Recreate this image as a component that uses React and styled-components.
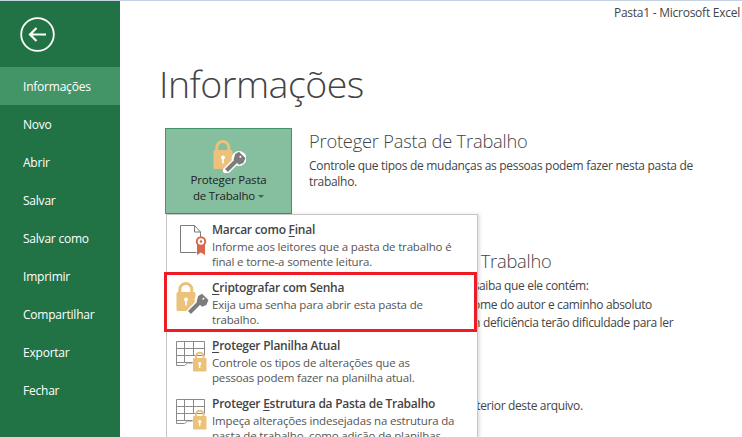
import React from "react";
import styled, { createGlobalStyle } from "styled-components";

const GlobalStyle = createGlobalStyle`
  html, body { margin: 0; padding: 0; background: #fff; }
  body { font-family: "Open Sans", "Noto Sans", sans-serif; overflow: hidden; }
`;

const Window = styled.div`
  position: relative;
  width: 742px;
  height: 437px;
  box-sizing: border-box;
  overflow: hidden;
  display: flex;
  background: #fff;
  color: #444;
  border-top: 1px solid #c6d3e4;
`;

const Sidebar = styled.nav`
  width: 120px;
  flex: none;
  background: #217346;
`;

const BackButton = styled.div`
  height: 66px;
  padding: 16px 0 0 20px;
  box-sizing: border-box;
`;

const NavItem = styled.div`
  height: 38px;
  padding-left: 23px;
  display: flex;
  align-items: center;
  color: #fff;
  font-size: 12px;
  letter-spacing: -0.22px;
  background: ${(props) => (props.$active ? "#439467" : "transparent")};
`;

const Main = styled.main`
  flex: 1;
  min-width: 0;
  padding-left: 39px;
  display: flex;
  flex-direction: column;
`;

const TitleBar = styled.div`
  height: 19px;
  box-sizing: border-box;
  padding: 3px 2px 0 0;
  text-align: right;
  font-size: 12px;
  line-height: 17px;
  letter-spacing: -0.25px;
  color: #444;
`;

const PageTitle = styled.h1`
  margin: 37px 0 0;
  height: 71px;
  font-size: 37.5px;
  line-height: 54px;
  font-weight: 300;
  letter-spacing: -0.5px;
  color: #444;
  white-space: nowrap;
`;

const Section = styled.section`
  display: flex;
  gap: 17px;
  margin-left: 6px;
  height: ${(props) => props.$height}px;
`;

const ProtectButton = styled.div`
  width: 127px;
  height: 86px;
  flex: none;
  box-sizing: border-box;
  background: #86bf9f;
  border: 1px solid #439467;
  display: flex;
  flex-direction: column;
  align-items: center;
  padding-top: 11px;
  color: #222;
  font-size: 11.5px;
  line-height: 16px;
  letter-spacing: -0.2px;
  text-align: center;
  svg { margin-left: 2px; }
`;

const ButtonLabel = styled.div`
  margin-top: -1px;
`;

const Caret = styled.span`
  display: inline-block;
  margin-left: 3px;
  vertical-align: 2px;
  border: 3px solid transparent;
  border-top-color: #555;
  border-bottom: 0;
`;

const SectionSpacer = styled.div`
  width: 127px;
  flex: none;
`;

const SectionBody = styled.div`
  min-width: 0;
  flex: 1;
`;

const SectionTitle = styled.h2`
  margin: 0 0 4px;
  font-size: 18.3px;
  line-height: 26px;
  font-weight: 300;
  letter-spacing: -0.2px;
  color: #444;
  white-space: nowrap;
`;

const BodyText = styled.p`
  margin: 0;
  font-size: 12px;
  line-height: 16px;
  letter-spacing: -0.3px;
  color: #444;
`;

const BulletList = styled.div`
  margin-top: -1px;
`;

const BulletText = styled(BodyText)`
  line-height: 18.5px;
  letter-spacing: -0.35px;
  white-space: nowrap;
  padding-left: ${(props) => props.$indent || 0}px;
`;

const Menu = styled.div`
  position: absolute;
  left: 166px;
  top: 213px;
  width: 312px;
  height: 240px;
  box-sizing: border-box;
  padding-top: 2px;
  background: #fff;
  border: 1px solid #c6c6c6;
  box-shadow: 2px 0 3px rgba(0, 0, 0, 0.12);
`;

const MenuRow = styled.div`
  position: relative;
  height: 58px;
  box-sizing: border-box;
  display: flex;
  padding: 3px 6px 0 8px;
  gap: 4px;
  &::after {
    content: ${(props) => (props.$marked ? '""' : "none")};
    position: absolute;
    left: -3px;
    right: 0;
    top: -3px;
    bottom: 1px;
    border: 3px solid #ed1c24;
  }
`;

const MenuIcon = styled.div`
  width: 33px;
  flex: none;
  box-sizing: border-box;
  padding-top: ${(props) => props.$top}px;
  padding-left: ${(props) => props.$left || 0}px;
`;

const MenuText = styled.div`
  flex: 1;
  min-width: 0;
`;

const MenuTitle = styled.div`
  font-size: 12px;
  line-height: 20px;
  font-weight: 600;
  letter-spacing: -0.25px;
  color: #444;
  white-space: nowrap;
  u { text-underline-offset: 2px; }
`;

const MenuDesc = styled.div`
  margin-top: -1px;
  font-size: 11.5px;
  line-height: 15.5px;
  letter-spacing: -0.17px;
  color: #555;
  white-space: nowrap;
`;

const BackIcon = () => (
  <svg width="36" height="36" viewBox="0 0 36 36" fill="none" stroke="#fff">
    <circle cx="17.5" cy="17.5" r="16.3" strokeWidth="1.8" />
    <path d="M10 17.5h16M16.5 11l-6.5 6.5 6.5 6.5" strokeWidth="2.2" />
  </svg>
);

// cadeado com a chave cinza, usado no botao e no item marcado
const LockKey = () => (
  <svg width="33" height="33" viewBox="0 0 33 33" style={{ display: "block" }}>
    <path d="M3.8 11V7.5a6 6 0 0 1 12 0V11" fill="none" stroke="#ecc27a" strokeWidth="3" />
    <rect x="0.5" y="10" width="19" height="19" rx="1.5" fill="#ecc27a" />
    <circle cx="10" cy="17.5" r="2" fill="#fff" />
    <rect x="9.2" y="17.5" width="1.6" height="6" fill="#fff" />
    <path d="M13.5 30.5l10-10" stroke="#fff" strokeWidth="7" strokeLinecap="round" />
    <circle cx="26" cy="18.5" r="7.4" fill="#fff" />
    <path d="M13.5 30.5l10-10" stroke="#7c7c7c" strokeWidth="4" />
    <path d="M26 11.8l6.4 6.2-2 5-4.4 1.8-5.4-5.2 1.6-5.6z" fill="#7c7c7c" />
    <circle cx="27.4" cy="16.8" r="1" fill="#fff" />
  </svg>
);

const DocRibbon = () => (
  <svg width="27" height="30" viewBox="0 0 27 30" style={{ display: "block" }}>
    <path d="M0.5 0.5h14l6 6.5v5M14.5 0.5v6.5h6M0.5 0.5v27h16" fill="none" stroke="#7a7a7a" />
    <path d="M17 19h8v11l-4-2.5-4 2.5z" fill="#d9674c" />
    <circle cx="21" cy="16.5" r="4.2" fill="#fff" stroke="#d9674c" strokeWidth="2" />
    <circle cx="21" cy="16.5" r="1.2" fill="#d9674c" />
  </svg>
);

const SheetLock = () => (
  <svg width="31" height="31" viewBox="0 0 31 31" style={{ display: "block" }}>
    <path
      d="M0.5 0.5h28v14M0.5 0.5v24h8l3-2.5h5M0.5 7.5h28M0.5 14.5h28M0.5 21.5h16M8.5 0.5v21M17.5 0.5v14"
      fill="none"
      stroke="#8a8a8a"
    />
    <path d="M20 18v-2.5a3.8 3.8 0 0 1 7.6 0V18" fill="none" stroke="#ecc27a" strokeWidth="2" />
    <rect x="17" y="17" width="13.5" height="13.5" rx="1" fill="#ecc27a" />
    <circle cx="23.7" cy="22.5" r="1.5" fill="#fff" />
    <rect x="23" y="22.5" width="1.4" height="4.5" fill="#fff" />
  </svg>
);

const navItems = [
  "Informações",
  "Novo",
  "Abrir",
  "Salvar",
  "Salvar como",
  "Imprimir",
  "Compartilhar",
  "Exportar",
  "Fechar",
];

const menuItems = [
  {
    key: "final",
    icon: <DocRibbon />,
    top: 5,
    left: 5,
    title: <>Marcar como <u>F</u>inal</>,
    desc: ["Informe aos leitores que a pasta de trabalho é", "final e torne-a somente leitura."],
  },
  {
    key: "senha",
    icon: <LockKey />,
    top: 4,
    left: 1,
    marked: true,
    title: <><u>C</u>riptografar com Senha</>,
    desc: ["Exija uma senha para abrir esta pasta de", "trabalho."],
  },
  {
    key: "planilha",
    icon: <SheetLock />,
    top: 5,
    left: 1,
    title: <><u>P</u>roteger Planilha Atual</>,
    desc: ["Controle os tipos de alterações que as", "pessoas podem fazer na planilha atual."],
  },
  {
    key: "estrutura",
    icon: <SheetLock />,
    top: 5,
    left: 1,
    title: <>Proteger <u>E</u>strutura da Pasta de Trabalho</>,
    desc: ["Impeça alterações indesejadas na estrutura da", "pasta de trabalho, como adição de planilhas."],
  },
];

export default function App() {
  return (
    <Window>
      <GlobalStyle />
      <Sidebar>
        <BackButton>
          <BackIcon />
        </BackButton>
        {navItems.map((item, i) => (
          <NavItem key={item} $active={i === 0}>
            {item}
          </NavItem>
        ))}
      </Sidebar>
      <Main>
        <TitleBar>Pasta1 - Microsoft Excel</TitleBar>
        <PageTitle>Informações</PageTitle>
        <Section $height={120}>
          <ProtectButton>
            <LockKey />
            <ButtonLabel>
              Proteger Pasta
              <br />
              de Trabalho
              <Caret />
            </ButtonLabel>
          </ProtectButton>
          <SectionBody>
            <SectionTitle>Proteger Pasta de Trabalho</SectionTitle>
            <BodyText>
              Controle que tipos de mudanças as pessoas podem fazer nesta pasta de trabalho.
            </BodyText>
          </SectionBody>
        </Section>
        <Section $height={149}>
          <SectionSpacer />
          <SectionBody>
            <SectionTitle>Inspecionar Pasta de Trabalho</SectionTitle>
            <BulletList>
              <BulletText>Antes de publicar este arquivo, saiba que ele contém:</BulletText>
              <BulletText>Propriedades do documento, nome do autor e caminho absoluto</BulletText>
              <BulletText $indent={10}>Conteúdo que as pessoas com deficiência terão dificuldade para ler</BulletText>
            </BulletList>
          </SectionBody>
        </Section>
        <Section $height={30}>
          <SectionSpacer />
          <SectionBody>
            <BulletText $indent={21}>Não há nenhuma versão anterior deste arquivo.</BulletText>
          </SectionBody>
        </Section>
      </Main>
      <Menu>
        {menuItems.map((item) => (
          <MenuRow key={item.key} $marked={item.marked}>
            <MenuIcon $top={item.top} $left={item.left}>{item.icon}</MenuIcon>
            <MenuText>
              <MenuTitle>{item.title}</MenuTitle>
              {item.desc.map((line) => (
                <MenuDesc key={line}>{line}</MenuDesc>
              ))}
            </MenuText>
          </MenuRow>
        ))}
      </Menu>
    </Window>
  );
}
